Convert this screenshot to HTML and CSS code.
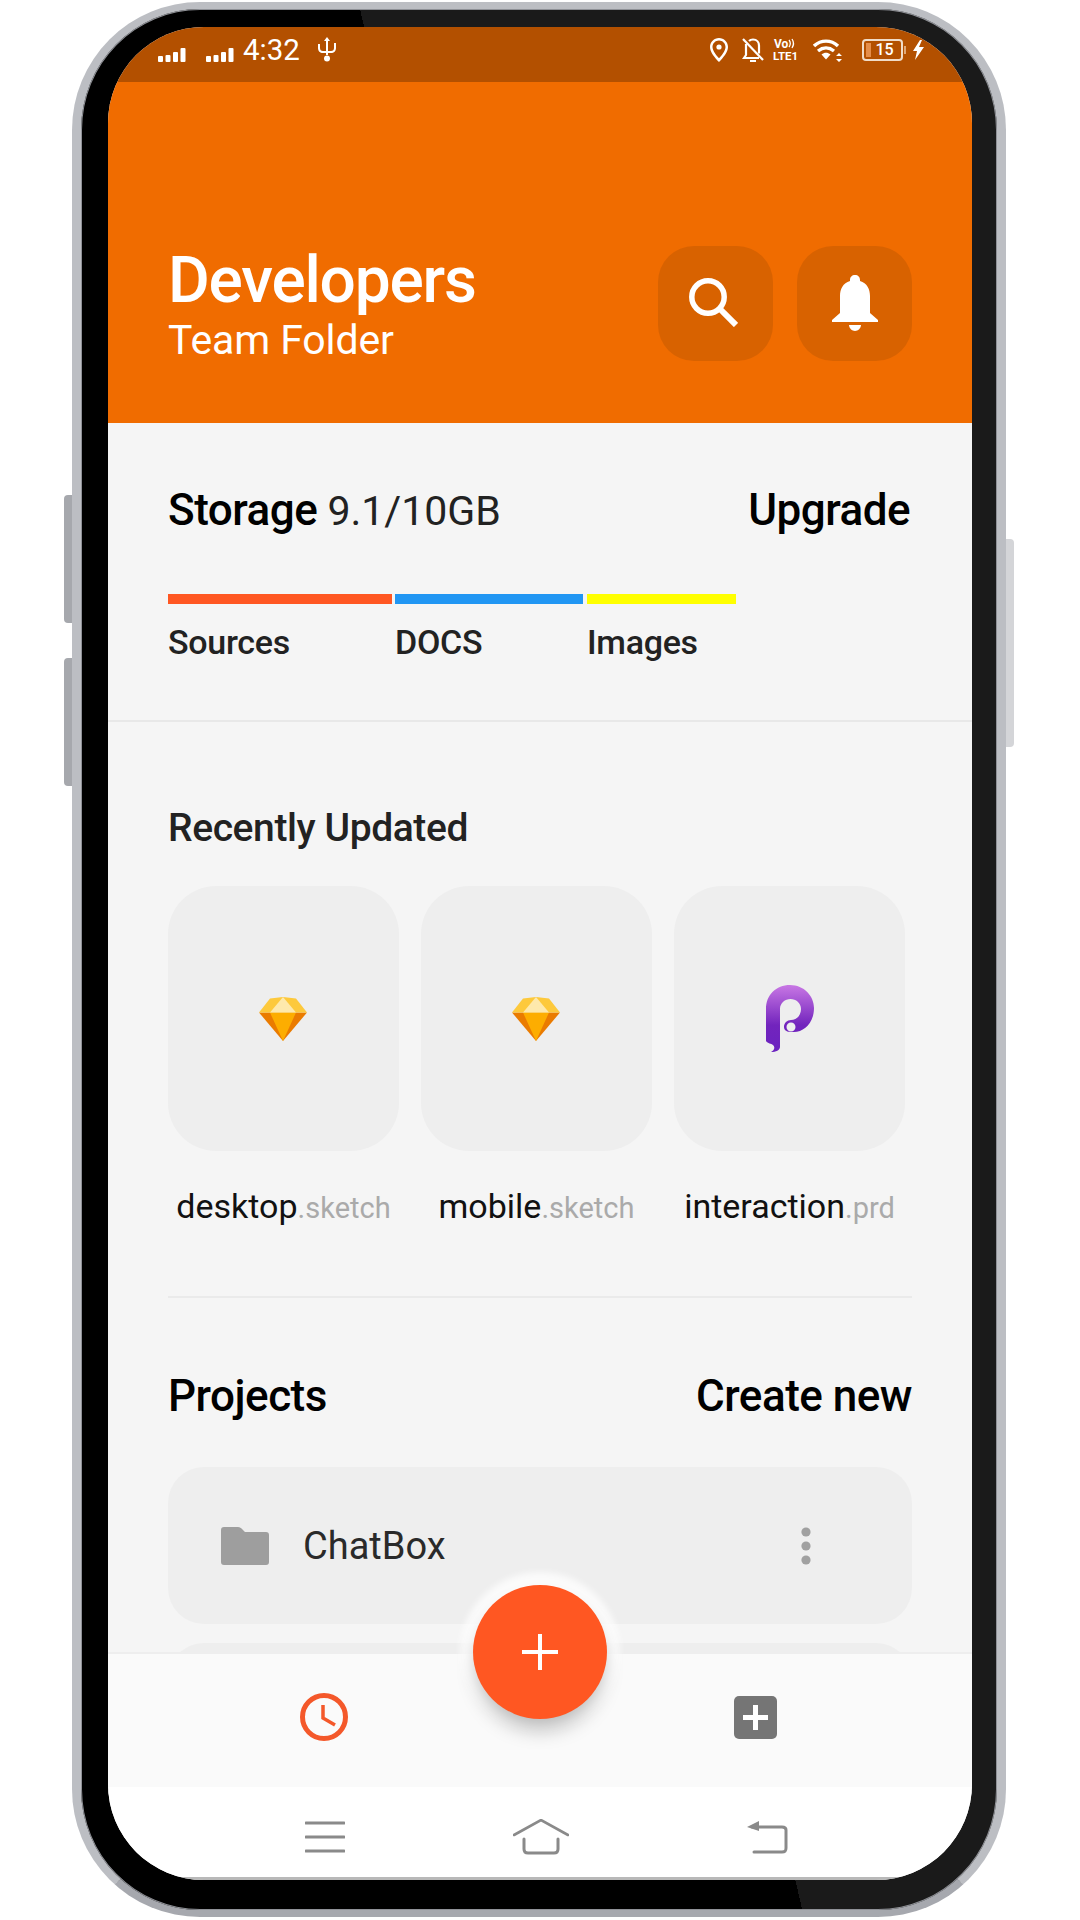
FILE: index.html
```html
<!DOCTYPE html>
<html lang="en">
<head>
<meta charset="utf-8">
<title>Developers Team Folder</title>
<link rel="stylesheet" href="styles.css">
</head>
<body>
<div class="phone">
  <span class="side side-vol-up"></span>
  <span class="side side-vol-down"></span>
  <span class="side side-power"></span>
  <div class="screen">
    <div class="status">
      <svg class="sig" viewBox="0 0 28 14"><rect x="0" y="8" width="5" height="6" rx="1"/><rect x="7.5" y="7" width="5" height="7" rx="1"/><rect x="15" y="4" width="5" height="10" rx="1"/><rect x="22.500" y="0" width="5" height="14" rx="1"/></svg>
      <svg class="sig sig-2" viewBox="0 0 28 14"><rect x="0" y="8" width="5" height="6" rx="1"/><rect x="7.5" y="7" width="5" height="7" rx="1"/><rect x="15" y="4" width="5" height="10" rx="1"/><rect x="22.500" y="0" width="5" height="14" rx="1"/></svg>
      <span class="time">4:32</span>
      <svg class="usb" viewBox="0 0 18 25"><path d="M9 0l3 4h-2v14h-2v-14h-2z"/><circle cx="9" cy="21.500" r="3"/><path d="M2 7v4c0 2 1 3 3 3h3v2h-3c-3 0-5-2-5-5v-4zM18 6v5c0 3-2 5-5 5h-3v-2h3c2 0 3-1 3-3v-5z"/></svg>
      <span class="status-gap"></span>
      <svg class="st-pin" viewBox="0 0 18 24"><path fill-rule="evenodd" d="M9 0c5 0 9 4 9 9 0 5-5 11-9 15-4-4-9-10-9-15 0-5 4-9 9-9zm0 2.500c-3.600 0-6.500 2.900-6.500 6.500 0 3.500 3.500 8 6.500 11.300 3-3.300 6.500-7.800 6.500-11.300 0-3.600-2.900-6.500-6.500-6.500z"/><circle cx="9" cy="9" r="2.600"/></svg>
      <svg class="st-belloff" viewBox="0 0 22 24" fill="none" stroke="#fff" stroke-width="2.200"><path d="M4 6v11l-2 3h15M7 3c1-1 2-1.500 4-1.500 4 0 6 3 6 6v8"/><path d="M1 1l20 21"/><path d="M8 23h6" stroke-width="2"/></svg>
      <span class="volte"><span class="vo">Vo<svg class="vo-waves" viewBox="0 0 8 11" fill="none" stroke="#fff" stroke-width="1.300"><path d="M1 2c1.500 2 1.500 5 0 7M4 1c2 3 2 6 0 9"/></svg></span><span class="lte">LTE1</span></span>
      <svg class="st-wifi" viewBox="0 0 30 24"><path fill="none" stroke="#fff" stroke-width="3.400" d="M1 8c7-6.500 17-6.500 24 0M5 13c5-4 11-4 16 0"/><path d="M8.500 16.500c3-2.500 6-2.500 9 0l-4.500 5z"/><path d="M26 15l3 3h-6zM26 24l3-3h-6z"/></svg>
      <span class="batt"><span class="batt-fill"></span><span class="batt-num">15</span><span class="batt-tip"></span></span>
      <svg class="st-bolt" viewBox="0 0 11 20"><path d="M7 0l-7 11h4l-2 9 9-13h-5l3-7z"/></svg>
    </div>

    <header class="hero">
      <div class="hero-text">
        <h1 class="hero-title">Developers</h1>
        <p class="hero-sub">Team Folder</p>
      </div>
      <div class="hero-actions">
        <button class="hero-btn" aria-label="Search">
          <svg class="ic-search" viewBox="0 0 49 49" fill="none" stroke="#fff"><circle cx="19" cy="19" r="16.200" stroke-width="5.500"/><path d="M30 30l17 17" stroke-width="6"/></svg>
        </button>
        <button class="hero-btn" aria-label="Notifications">
          <svg class="ic-bell" viewBox="0 0 46 56" fill="#fff"><path d="M23 0c3 0 5 2 5 5v1c7 2 10 8 10 15v17l8 7v2H0v-2l8-7V21C8 14 11 8 18 6V5c0-3 2-5 5-5z"/><path d="M17 50h12c0 3-3 6-6 6s-6-3-6-6z"/></svg>
        </button>
      </div>
    </header>

    <main class="main">
      <section class="storage">
        <div class="row-between storage-row">
          <p class="storage-title"><strong class="strong">Storage</strong> <span class="storage-val">9.1/10GB</span></p>
          <span class="link">Upgrade</span>
        </div>
        <div class="segments">
          <div class="seg seg-a"><span class="bar bar-a"></span><span class="seg-label">Sources</span></div>
          <div class="seg seg-b"><span class="bar bar-b"></span><span class="seg-label">DOCS</span></div>
          <div class="seg seg-c"><span class="bar bar-c"></span><span class="seg-label">Images</span></div>
        </div>
      </section>

      <section class="recent">
        <h2 class="recent-title">Recently Updated</h2>
        <div class="cards">
          <div class="file">
            <div class="thumb">
              <svg class="ic-sketch" viewBox="0 0 48 44"><path fill="#ea7b00" d="M0 15.500h48L24 44z"/><path fill="#fdad00" d="M11 15.500h26L24 44z"/><path fill="#fdc93c" d="M11 1.500L24 0l13 1.500 11 14H0z"/><path fill="#fee9ac" d="M24 0l13 15.500H11z"/></svg>
            </div>
            <p class="file-name">desktop<span class="ext">.sketch</span></p>
          </div>
          <div class="file">
            <div class="thumb">
              <svg class="ic-sketch" viewBox="0 0 48 44"><path fill="#ea7b00" d="M0 15.500h48L24 44z"/><path fill="#fdad00" d="M11 15.500h26L24 44z"/><path fill="#fdc93c" d="M11 1.500L24 0l13 1.500 11 14H0z"/><path fill="#fee9ac" d="M24 0l13 15.500H11z"/></svg>
            </div>
            <p class="file-name">mobile<span class="ext">.sketch</span></p>
          </div>
          <div class="file">
            <div class="thumb">
              <svg class="ic-p" viewBox="0 0 48 67"><defs><linearGradient id="pg" x1="0" y1="0" x2="0" y2="1"><stop offset="0" stop-color="#c877e4"/><stop offset=".6" stop-color="#7224bd"/><stop offset="1" stop-color="#6a22c0"/></linearGradient></defs><path fill="url(#pg)" fill-rule="evenodd" d="M0 56V24C0 10 10 0 24 0s24 11 24 23c0 15-10 24-20 24-6 .5-10-1-10-5 0-4 3-7 7-7 5 0 10-4 10-11 0-6-5-10-10.500-10C19 14 14 18 14 24v38c0 3-4 5-9 5 4-2 4-5 2-7-2-2-5-1-7-4zM25 37.500a4.500 4.500 0 1 0 0 9 4.500 4.500 0 0 0 0-9z"/></svg>
            </div>
            <p class="file-name">interaction<span class="ext">.prd</span></p>
          </div>
        </div>
      </section>

      <section class="projects">
        <div class="row-between">
          <h2 class="strong proj-title">Projects</h2>
          <span class="link">Create new</span>
        </div>
        <div class="proj-list">
          <div class="proj">
            <svg class="ic-folder" viewBox="0 0 48 38"><path fill="#9e9e9e" d="M3 0h14c2 0 3 1 4 2l3 3h21c2 0 3 1 3 3v27c0 2-1 3-3 3H3c-2 0-3-1-3-3V3c0-2 1-3 3-3z"/></svg>
            <span class="proj-name">ChatBox</span>
            <svg class="ic-dots" viewBox="0 0 10 38"><circle cx="5" cy="5" r="4.600"/><circle cx="5" cy="19" r="4.600"/><circle cx="5" cy="33" r="4.600"/></svg>
          </div>
          <div class="proj"></div>
        </div>
      </section>
    </main>

    <div class="tabbar">
      <svg class="ic-clock" viewBox="0 0 48 48" fill="none" stroke="#f4582a"><circle cx="24" cy="24" r="21.500" stroke-width="5"/><path d="M23 12v13l12 7" stroke-width="3.500"/></svg>
      <svg class="ic-add" viewBox="0 0 43 43"><rect width="43" height="43" rx="5" fill="#757575"/><path fill="#fff" d="M19 9h5v10h10v5H24v10h-5V24H9v-5h10z"/></svg>
      <button class="fab" aria-label="Add">
        <svg class="ic-plus" viewBox="0 0 36 36"><path fill="#fff" d="M16 0h4v16h16v4H20v16h-4V20H0v-4h16z"/></svg>
      </button>
    </div>

    <nav class="sysnav">
      <svg class="nav-menu" viewBox="0 0 40 32" stroke="#8a8a8a" stroke-width="3" stroke-linecap="round"><path d="M1 2h38M1 16h38M1 30h38"/></svg>
      <svg class="nav-home" viewBox="0 0 56 36" fill="none" stroke="#8a8a8a" stroke-width="2.600" stroke-linecap="round"><path d="M1 16L28 1l27 15"/><path d="M11 20v10c0 3 2 4 4 4h26c2 0 4-1 4-4V20" stroke-width="3"/></svg>
      <svg class="nav-back" viewBox="0 0 42 34" fill="none" stroke="#8a8a8a" stroke-width="3" stroke-linecap="round"><path d="M8 32h28c3 0 4-1 4-4V10c0-2-1-3-4-3H6"/><path d="M13 1v10L1 7z" fill="#8a8a8a" stroke="none"/></svg>
    </nav>
    <div class="chin"></div>
  </div>
</div>
</body>
</html>
```
FILE: styles.css
```css
* { box-sizing: border-box; }
html, body { margin: 0; padding: 0; background: #fff; }
body { width: 1080px; height: 1920px; overflow: hidden; font-family: Roboto, "Noto Sans", sans-serif; }
h1, h2, p { margin: 0; font-weight: inherit; font-size: inherit; }
button { border: 0; padding: 0; font: inherit; }
svg { display: block; flex: none; }

.phone {
  position: relative;
  width: 934px;
  height: 1915px;
  margin: 2px 0 0 72px;
  padding: 18px 25px 30px 27px;
  border: solid #bcbec3;
  border-width: 7px 9px;
  border-bottom-color: #a6a8ae;
  border-radius: 128px;
  background: linear-gradient(76.9deg, #000 53.1%, #1a1a1a 53.1%);
  box-shadow: inset 0 0 0 1px #8f9197;
}
.side { position: absolute; background: #a6a8ad; border-radius: 4px 0 0 4px; }
.side-vol-up { left: -17px; top: 486px; width: 8px; height: 128px; }
.side-vol-down { left: -17px; top: 649px; width: 8px; height: 128px; }
.side-power { right: -17px; top: 530px; width: 8px; height: 208px; background: #d4d5d8; border-radius: 0 4px 4px 0; }

.screen {
  position: relative;
  display: flex;
  flex-direction: column;
  width: 864px;
  height: 1853px;
  overflow: hidden;
  border-radius: 96px;
  background: #f5f5f5;
}

.status { display: flex; align-items: center; flex: none; height: 55px; padding: 0 0 10px 50px; background: #b35000; color: #fff; }
.status svg { fill: #fff; }
.sig { width: 28px; height: 14px; margin-top: 11px; }
.sig-2 { margin-left: 20px; }
.time { margin-left: 9px; font-size: 29.5px; line-height: 36px; }
.usb { width: 18px; height: 25px; margin-left: 18px; }
.status-gap { flex: 1; }
.st-pin { width: 18px; height: 24px; }
.st-belloff { width: 22px; height: 24px; margin-left: 14px; fill: none !important; }
.volte { display: flex; flex-direction: column; width: 28px; margin-left: 9px; font-weight: 700; line-height: 12px; }
.vo { display: flex; align-items: center; font-size: 12px; padding-left: 1px; }
.vo-waves { width: 8px; height: 11px; fill: none !important; }
.lte { font-size: 11.5px; }
.st-wifi { width: 30px; height: 24px; margin-left: 12px; }
.batt { position: relative; display: flex; align-items: center; justify-content: center; width: 41px; height: 22px; margin-left: 19px; border: 2px solid #f0dcc8; border-radius: 4px; }
.batt-fill { position: absolute; left: 2px; top: 2px; bottom: 2px; width: 5px; background: #e58e4a; }
.batt-num { font-size: 16px; font-weight: 500; line-height: 18px; margin-left: 4px; }
.batt-tip { position: absolute; right: -5px; top: 5px; width: 2px; height: 8px; background: #e0a878; }
.st-bolt { width: 11px; height: 20px; margin: 0 48px 0 10px; }

.hero { display: flex; align-items: center; justify-content: space-between; flex: none; height: 341px; padding: 82px 60px 0; background: #f06c00; color: #fff; }
.hero-text { margin-top: 26px; }
.hero-title { font-size: 64px; line-height: 66px; font-weight: 500; letter-spacing: -1.2px; }
.hero-sub { font-size: 41px; line-height: 52px; letter-spacing: -.1px; }
.hero-actions { display: flex; gap: 24px; margin-top: 19px; }
.hero-btn { display: flex; align-items: center; justify-content: center; width: 115px; height: 115px; border-radius: 36px; background: #d86200; }
.ic-search { width: 49px; height: 49px; margin: -2px 4px 0 0; }
.ic-bell { width: 46px; height: 56px; }

.main { flex: 1; min-height: 0; overflow: hidden; }
.row-between { display: flex; align-items: center; justify-content: space-between; height: 48px; }

.storage { height: 299px; padding: 63px 60px 0; border-bottom: 2px solid #e8e8e8; }
.storage-row { padding-right: 2px; }
.storage-title { font-size: 41px; line-height: 48px; color: #000; }
.strong { font-size: 44px; font-weight: 500; letter-spacing: -.5px; color: #000; }
.storage-val { font-size: 41px; color: #222; }
.link { font-size: 44px; font-weight: 500; letter-spacing: -.5px; color: #000; }
.segments { display: flex; gap: 3px; margin-top: 60px; }
.seg { display: flex; flex-direction: column; }
.seg-a { width: 224px; }
.seg-b { width: 188px; }
.seg-c { width: 149px; margin-left: 1px; }
.bar { display: block; height: 10px; }
.bar-a { background: #ff5722; }
.bar-b { background: #2196f3; }
.bar-c { background: #ffff00; }
.seg-label { margin-top: 18px; font-size: 34px; line-height: 40px; font-weight: 500; letter-spacing: -.3px; color: #222; }

.recent { margin: 0 60px; height: 576px; padding-top: 86px; border-bottom: 2px solid #eaeaea; }
.recent-title { font-size: 39px; line-height: 40px; font-weight: 500; letter-spacing: -.4px; color: #222; }
.cards { display: grid; grid-template-columns: repeat(3, 231px); column-gap: 22px; margin-top: 38px; }
.file { display: flex; flex-direction: column; align-items: center; }
.thumb { display: flex; align-items: center; justify-content: center; width: 100%; height: 265px; border-radius: 48px; background: #eeeeee; }
.ic-sketch { width: 48px; height: 44px; margin-right: 1px; }
.ic-p { width: 48px; height: 67px; }
.file-name { margin-top: 35px; font-size: 34px; line-height: 40px; color: #111; white-space: nowrap; }
.ext { font-size: 29px; color: #aaa; }

.projects { padding: 74px 60px 0; }
.proj-title { line-height: 48px; }
.proj-list { display: flex; flex-direction: column; gap: 19px; margin-top: 47px; }
.proj { display: flex; align-items: center; height: 157px; padding: 0 101px 0 53px; border-radius: 36px; background: #eeeeee; }
.ic-folder { width: 48px; height: 38px; }
.proj-name { flex: 1; margin-left: 34px; font-size: 38px; color: #2a2a2a; }
.ic-dots { width: 10px; height: 38px; fill: #a0a0a0; }

.tabbar { position: relative; display: flex; align-items: center; flex: none; height: 135px; padding: 0 0 7px 192px; background: #fafafa; border-top: 2px solid #eeeeee; }
.ic-clock { width: 48px; height: 48px; }
.ic-add { width: 43px; height: 43px; margin-left: 386px; }
.fab { position: absolute; left: 365px; top: -69px; display: flex; align-items: center; justify-content: center; width: 134px; height: 134px; border-radius: 50%; background: #ff5722; box-shadow: 0 14px 20px -4px rgba(0, 0, 0, .28), 0 0 6px 13px rgba(255, 255, 255, .75); }
.ic-plus { width: 36px; height: 36px; }

.sysnav { display: flex; align-items: center; flex: none; height: 90px; padding: 10px 0 0 197px; background: #fff; }
.nav-menu { width: 40px; height: 32px; }
.nav-home { width: 56px; height: 36px; margin-left: 168px; }
.nav-back { width: 42px; height: 34px; margin-left: 177px; }
.chin { flex: none; height: 3px; background: #b8b8b8; }
```
